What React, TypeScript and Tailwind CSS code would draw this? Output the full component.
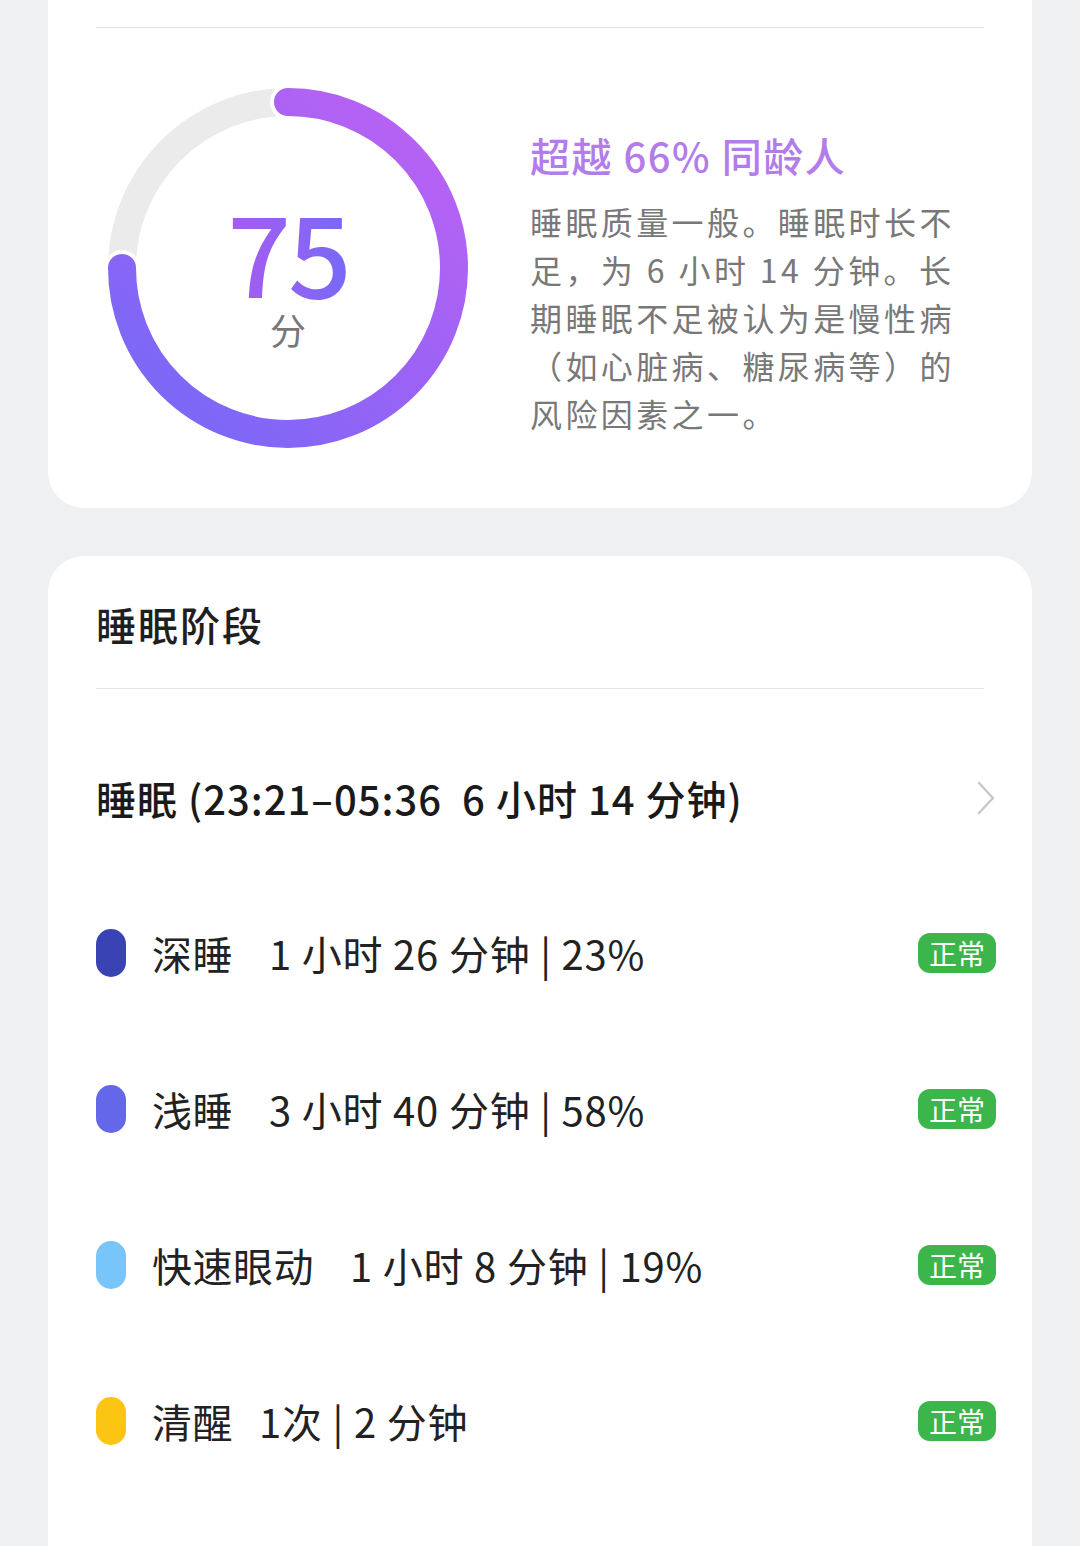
import * as React from 'react';

const FONT = '"Noto Sans CJK SC", "Noto Sans", sans-serif';

interface Stage {
  name: string;
  detail: string;
  dot: string;
  gap: string;
}

const stages: Stage[] = [
  { name: '深睡', detail: '1 小时 26 分钟 | 23%', dot: 'bg-[#3a43b3]', gap: 'ml-[36px]' },
  { name: '浅睡', detail: '3 小时 40 分钟 | 58%', dot: 'bg-[#6467e9]', gap: 'ml-[36px]' },
  { name: '快速眼动', detail: '1 小时 8 分钟 | 19%', dot: 'bg-[#78c5f9]', gap: 'ml-[36px]' },
  { name: '清醒', detail: '1次 | 2 分钟', dot: 'bg-[#fcc513]', gap: 'ml-[26px]' },
];

function ScoreRing({ score }: { score: number }) {
  const r = 166;
  const angle = (score / 100) * 2 * Math.PI;
  // start at 12 o'clock, clockwise
  const ex = 180 + r * Math.sin(angle);
  const ey = 180 - r * Math.cos(angle);
  const large = score > 50 ? 1 : 0;
  const arc = `M180 ${180 - r} A${r} ${r} 0 ${large} 1 ${ex.toFixed(2)} ${ey.toFixed(2)}`;

  return (
    <div className="relative h-[360px] w-[360px] shrink-0">
      <svg width="360" height="360" viewBox="0 0 360 360" className="absolute inset-0">
        <defs>
          <linearGradient id="ring" gradientUnits="userSpaceOnUse" x1="300" y1="20" x2="40" y2="300">
            <stop offset="0%" stopColor="#b962f3" />
            <stop offset="55%" stopColor="#9863f5" />
            <stop offset="100%" stopColor="#7b68f7" />
          </linearGradient>
        </defs>
        <circle cx="180" cy="180" r={r} fill="none" stroke="#ebebeb" strokeWidth="28" />
        <path d={arc} fill="none" stroke="#ffffff" strokeWidth="36" strokeLinecap="round" />
        <path d={arc} fill="none" stroke="url(#ring)" strokeWidth="28" strokeLinecap="round" />
      </svg>
      <div className="absolute inset-0 flex flex-col items-center justify-center pt-[18px]">
        <span className="block bg-gradient-to-r from-[#a75bf0] to-[#7769f7] bg-clip-text pb-[14px] text-[112px] leading-[88px] font-medium tracking-[-3px] text-transparent">
          {score}
        </span>
        <span className="mt-[2px] text-[36px] leading-[40px] text-[#777777]">分</span>
      </div>
    </div>
  );
}

export default function App() {
  return (
    <div className="min-h-[1546px] bg-[#eff0f2] px-[48px]" style={{ fontFamily: FONT }}>
      {/* score card */}
      <div className="rounded-b-[36px] bg-white pt-[27px]">
        <div className="mx-[48px] h-px bg-[#e2e2e2]" />
        <div className="flex items-center pl-[60px] pt-[60px] pb-[60px]">
          <ScoreRing score={75} />
          <div className="ml-[62px] w-[440px] pt-[30px]">
            <p className="text-[40px] leading-[52px] font-medium tracking-[1.5px] text-[#b37ceb]">超越 66% 同龄人</p>
            <p className="mt-[16px] text-[32px] leading-[48px] tracking-[3.4px] text-[#787878]">
              睡眠质量一般。睡眠时长不足，为 6 小时 14 分钟。长期睡眠不足被认为是慢性病（如心脏病、糖尿病等）的风险因素之一。
            </p>
          </div>
        </div>
      </div>

      {/* stages card */}
      <div className="mt-[48px] rounded-t-[36px] bg-white pb-[60px]">
        <div className="px-[48px] pt-[44px] pb-[40px]">
          <h2 className="text-[40px] leading-[48px] font-medium tracking-[2px] text-[#1f1f1f]">睡眠阶段</h2>
        </div>
        <div className="mx-[48px] h-px bg-[#e4e4e4]" />

        <div className="flex h-[186px] items-center pt-[32px] pl-[48px] pr-[36px]">
          <span className="flex-1 text-[40px] leading-[48px] font-medium tracking-[1px] text-[#1a1a1a]">
            睡眠 (23:21–05:36&nbsp;&nbsp;6 小时 14 分钟)
          </span>
          <svg width="20" height="36" viewBox="0 0 20 36" className="shrink-0">
            <path d="M3 3 L17 18 L3 33" fill="none" stroke="#c8c8c8" strokeWidth="2.5" strokeLinecap="round" strokeLinejoin="round" />
          </svg>
        </div>

        {stages.map((s) => (
          <div key={s.name} className="flex h-[156px] items-center pl-[48px] pr-[36px]">
            <span className={`h-[48px] w-[30px] shrink-0 rounded-full ${s.dot}`} />
            <span className="ml-[26px] text-[40px] leading-[48px] tracking-[0.5px] text-[#222222]">{s.name}</span>
            <span className={`${s.gap} flex-1 text-[40px] leading-[48px] tracking-[0.8px] text-[#222222]`}>{s.detail}</span>
            <span className="flex h-[40px] w-[78px] items-center justify-center rounded-[12px] bg-[#3cb54b] text-[28px] leading-[32px] text-white">
              正常
            </span>
          </div>
        ))}
      </div>
    </div>
  );
}
